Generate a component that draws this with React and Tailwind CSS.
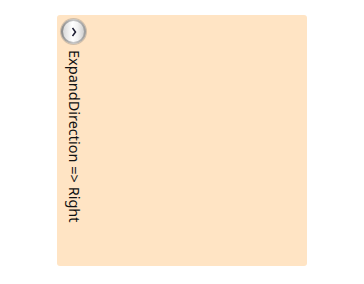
export default function App() {
  return (
    <div className="w-[364px] h-[284px] bg-white pl-[57px] pt-[15px]" style={{ fontFamily: '"Noto Sans", sans-serif' }}>
      <div className="w-[250px] h-[251px] bg-[#ffe4c4] rounded-[3px] flex flex-col items-start pl-[4px] pt-[4px]">
        <button className="w-[25px] h-[25px] rounded-full p-[2px] bg-gradient-to-r from-[#8a8a8a] via-[#c8c8c8] to-[#9a9a9a] shadow-[0_0_0_1px_rgba(120,120,120,0.35)]">
          <span className="w-full h-full rounded-full flex items-center justify-center bg-[linear-gradient(90deg,#d8d8d8,#ffffff_45%,#f2f2f2_70%,#d0d0d0)]">
            <svg width="10" height="12" viewBox="0 0 10 12">
              <path d="M3.5 2 L6.5 6 L3.5 10" fill="none" stroke="#1b1b30" strokeWidth="1.5" />
            </svg>
          </span>
        </button>
        <span className="[writing-mode:vertical-rl] text-[14.5px] text-[#111] mt-[6px] ml-[6px] leading-none whitespace-pre">
          ExpandDirection =&gt; Right
        </span>
      </div>
    </div>
  );
}
